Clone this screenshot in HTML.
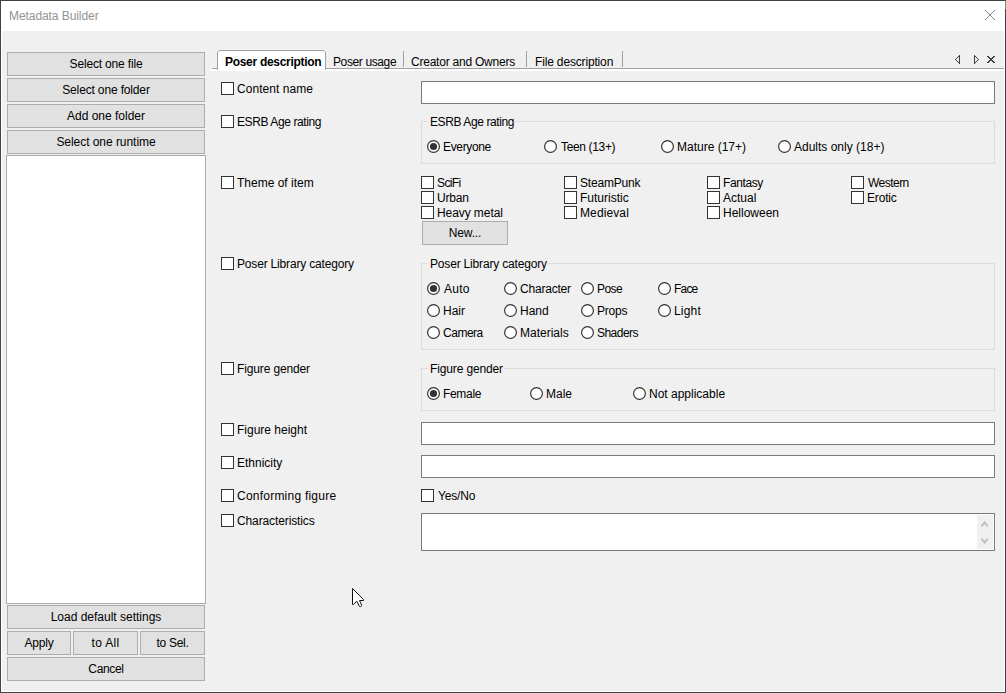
<!DOCTYPE html>
<html><head><meta charset="utf-8">
<style>
html,body{margin:0;padding:0;}
body{width:1006px;height:693px;position:relative;overflow:hidden;background:#434343;font:12px/14px "Liberation Sans",sans-serif;color:#000;}
.a{position:absolute;}
.t{position:absolute;white-space:nowrap;font:12px/14px "Liberation Sans",sans-serif;}
.btn{position:absolute;box-sizing:border-box;border:1px solid #adadad;background:#e1e1e1;height:24px;text-align:center;line-height:14px;padding-top:4px;white-space:nowrap;}
.cb{position:absolute;box-sizing:border-box;width:13px;height:13px;border:1px solid #333;background:#fff;}
.rb{position:absolute;width:13px;height:13px;}
.ed{position:absolute;box-sizing:border-box;border:1px solid #7a7a7a;background:#fff;}
.gb{position:absolute;box-sizing:border-box;border:1px solid #dcdcdc;}
.gt{position:absolute;white-space:nowrap;background:#f0f0f0;padding:0 1px 0 2px;font:12px/14px "Liberation Sans",sans-serif;}
</style></head><body>
<!-- window frame -->
<div class="a" style="left:1px;top:1px;width:1004px;height:691px;background:#fff;"></div>
<div class="a" style="left:2px;top:31px;width:1002px;height:660px;background:#f0f0f0;"></div>
<div class="t" style="left:9px;top:9px;color:#939393;letter-spacing:-0.07px;">Metadata Builder</div>
<svg class="a" style="left:985px;top:10px" width="10" height="10" shape-rendering="crispEdges"><g fill="#8a8a8a"><rect x="5" y="4" width="1" height="1"></rect><rect x="2" y="2" width="1" height="1"></rect><rect x="7" y="7" width="1" height="1"></rect><rect x="4" y="5" width="1" height="1"></rect><rect x="3" y="3" width="1" height="1"></rect><rect x="3" y="6" width="1" height="1"></rect><rect x="8" y="8" width="1" height="1"></rect><rect x="2" y="7" width="1" height="1"></rect><rect x="1" y="8" width="1" height="1"></rect><rect x="4" y="4" width="1" height="1"></rect><rect x="9" y="0" width="1" height="1"></rect><rect x="5" y="5" width="1" height="1"></rect><rect x="0" y="0" width="1" height="1"></rect><rect x="9" y="9" width="1" height="1"></rect><rect x="8" y="1" width="1" height="1"></rect><rect x="1" y="1" width="1" height="1"></rect><rect x="0" y="9" width="1" height="1"></rect><rect x="7" y="2" width="1" height="1"></rect><rect x="6" y="6" width="1" height="1"></rect><rect x="6" y="3" width="1" height="1"></rect></g></svg>

<div class="a" style="left:1005px;top:1px;width:1px;height:8px;background:#6b9a5e;"></div>
<!-- left panel -->
<div class="btn" style="left: 7px; top: 52px; width: 198px; letter-spacing: -0.171px;">Select one file</div>
<div class="btn" style="left: 7px; top: 78px; width: 198px; letter-spacing: -0.15px;">Select one folder</div>
<div class="btn" style="left: 7px; top: 104px; width: 198px; letter-spacing: 0px;">Add one folder</div>
<div class="btn" style="left: 7px; top: 130px; width: 198px; letter-spacing: -0.047px;">Select one runtime</div>
<div class="a" style="left:6px;top:155px;width:198px;height:447px;border:1px solid #a9abb0;background:#fff;"></div>
<div class="btn" style="left: 7px; top: 605px; width: 198px; letter-spacing: 0px;">Load default settings</div>
<div class="btn" style="left: 7px; top: 631px; width: 64px; letter-spacing: -0.2px;">Apply</div>
<div class="btn" style="left: 73px; top: 631px; width: 65px; letter-spacing: 0.34px;">to All</div>
<div class="btn" style="left: 140px; top: 631px; width: 65px; letter-spacing: -0.267px;">to Sel.</div>
<div class="btn" style="left: 7px; top: 657px; width: 198px; letter-spacing: -0.32px;">Cancel</div>

<!-- tabs -->
<div class="a" style="left:212px;top:68px;width:792px;height:1px;background:#a0a0a0;"></div>
<div class="a" style="left:211px;top:69px;width:793px;height:2px;background:#fff;"></div>
<div class="a" style="left:218px;top:51px;width:107px;height:19px;background:#fff;"></div>
<div class="a" style="left:219px;top:50px;width:105px;height:1px;background:#a0a0a0;"></div>
<div class="a" style="left:218px;top:51px;width:1px;height:1px;background:#a0a0a0;"></div>
<div class="a" style="left:324px;top:51px;width:1px;height:1px;background:#a0a0a0;"></div>
<div class="a" style="left:217px;top:52px;width:1px;height:18px;background:#a0a0a0;"></div>
<div class="a" style="left:325px;top:52px;width:1px;height:18px;background:#a0a0a0;"></div>
<div class="t" style="left: 225px; top: 55px; font-weight: bold; letter-spacing: -0.3px;">Poser description</div>
<div class="t" style="left: 333px; top: 55px; letter-spacing: -0.38px;">Poser usage</div>
<div class="a" style="left:403px;top:51px;width:1px;height:16px;background:#a0a0a0;"></div>
<div class="t" style="left: 411px; top: 55px; letter-spacing: -0.227px;">Creator and Owners</div>
<div class="a" style="left:526px;top:51px;width:1px;height:16px;background:#a0a0a0;"></div>
<div class="t" style="left: 535px; top: 55px; letter-spacing: -0.16px;">File description</div>
<div class="a" style="left:622px;top:51px;width:1px;height:16px;background:#a0a0a0;"></div>
<svg class="a" style="left:950px;top:50px" width="50" height="20" shape-rendering="crispEdges"><g fill="#404040"><rect x="9" y="5" width="1" height="1"></rect><rect x="9" y="6" width="1" height="1"></rect><rect x="9" y="7" width="1" height="1"></rect><rect x="9" y="8" width="1" height="1"></rect><rect x="9" y="9" width="1" height="1"></rect><rect x="9" y="10" width="1" height="1"></rect><rect x="9" y="11" width="1" height="1"></rect><rect x="9" y="12" width="1" height="1"></rect><rect x="9" y="13" width="1" height="1"></rect><rect x="8" y="6" width="1" height="1"></rect><rect x="7" y="7" width="1" height="1"></rect><rect x="6" y="8" width="1" height="1"></rect><rect x="5" y="9" width="1" height="1"></rect><rect x="6" y="10" width="1" height="1"></rect><rect x="7" y="11" width="1" height="1"></rect><rect x="8" y="12" width="1" height="1"></rect><rect x="24" y="5" width="1" height="1"></rect><rect x="24" y="6" width="1" height="1"></rect><rect x="24" y="7" width="1" height="1"></rect><rect x="24" y="8" width="1" height="1"></rect><rect x="24" y="9" width="1" height="1"></rect><rect x="24" y="10" width="1" height="1"></rect><rect x="24" y="11" width="1" height="1"></rect><rect x="24" y="12" width="1" height="1"></rect><rect x="24" y="13" width="1" height="1"></rect><rect x="25" y="6" width="1" height="1"></rect><rect x="26" y="7" width="1" height="1"></rect><rect x="27" y="8" width="1" height="1"></rect><rect x="28" y="9" width="1" height="1"></rect><rect x="27" y="10" width="1" height="1"></rect><rect x="26" y="11" width="1" height="1"></rect><rect x="25" y="12" width="1" height="1"></rect><rect x="37" y="6" width="1" height="1"></rect><rect x="38" y="6" width="1" height="1"></rect><rect x="43" y="6" width="1" height="1"></rect><rect x="44" y="6" width="1" height="1"></rect><rect x="38" y="7" width="1" height="1"></rect><rect x="39" y="7" width="1" height="1"></rect><rect x="42" y="7" width="1" height="1"></rect><rect x="43" y="7" width="1" height="1"></rect><rect x="39" y="8" width="1" height="1"></rect><rect x="40" y="8" width="1" height="1"></rect><rect x="41" y="8" width="1" height="1"></rect><rect x="42" y="8" width="1" height="1"></rect><rect x="40" y="9" width="1" height="1"></rect><rect x="41" y="9" width="1" height="1"></rect><rect x="39" y="10" width="1" height="1"></rect><rect x="40" y="10" width="1" height="1"></rect><rect x="41" y="10" width="1" height="1"></rect><rect x="42" y="10" width="1" height="1"></rect><rect x="38" y="11" width="1" height="1"></rect><rect x="39" y="11" width="1" height="1"></rect><rect x="42" y="11" width="1" height="1"></rect><rect x="43" y="11" width="1" height="1"></rect><rect x="37" y="12" width="1" height="1"></rect><rect x="38" y="12" width="1" height="1"></rect><rect x="43" y="12" width="1" height="1"></rect><rect x="44" y="12" width="1" height="1"></rect></g></svg>

<!-- row labels -->
<div class="cb" style="left:221px;top:82px"></div><div class="t" style="left: 237px; top: 82px; letter-spacing: 0.057px;">Content name</div>
<div class="cb" style="left:221px;top:115px"></div><div class="t" style="left: 237px; top: 115px; letter-spacing: -0.4px;">ESRB Age rating</div>
<div class="cb" style="left:221px;top:176px"></div><div class="t" style="left: 237px; top: 176px; letter-spacing: 0px;">Theme of item</div>
<div class="cb" style="left:221px;top:257px"></div><div class="t" style="left: 237px; top: 257px; letter-spacing: -0.178px;">Poser Library category</div>
<div class="cb" style="left:221px;top:362px"></div><div class="t" style="left: 237px; top: 362px; letter-spacing: -0.134px;">Figure gender</div>
<div class="cb" style="left:221px;top:423px"></div><div class="t" style="left: 237px; top: 423px; letter-spacing: 0px;">Figure height</div>
<div class="cb" style="left:221px;top:456px"></div><div class="t" style="left: 237px; top: 456px; letter-spacing: 0px;">Ethnicity</div>
<div class="cb" style="left:221px;top:489px"></div><div class="t" style="left: 237px; top: 489px; letter-spacing: 0.23px;">Conforming figure</div>
<div class="cb" style="left:221px;top:514px"></div><div class="t" style="left: 237px; top: 514px; letter-spacing: -0.114px;">Characteristics</div>

<!-- content name -->
<div class="ed" style="left:421px;top:81px;width:574px;height:23px;"></div>

<!-- ESRB group -->
<div class="gb" style="left:421px;top:121px;width:574px;height:43px;"></div>
<div class="gt" style="left: 428px; top: 115px; letter-spacing: -0.4px;">ESRB Age rating</div>
<!--RADIOS_ESRB-->
<svg class="rb" style="left:427px;top:140px" width="13" height="13" viewBox="0 0 13 13"><circle cx="6.5" cy="6.5" r="5.9" fill="#fff" stroke="#333" stroke-width="1.2"></circle><circle cx="6.5" cy="6.5" r="3.6" fill="#333"></circle></svg><div class="t" style="left: 443px; top: 140px; letter-spacing: -0.343px;">Everyone</div>
<svg class="rb" style="left:544px;top:140px" width="13" height="13" viewBox="0 0 13 13"><circle cx="6.5" cy="6.5" r="5.9" fill="#fff" stroke="#333" stroke-width="1.2"></circle></svg><div class="t" style="left: 561px; top: 140px; letter-spacing: -0.35px;">Teen (13+)</div>
<svg class="rb" style="left:661px;top:140px" width="13" height="13" viewBox="0 0 13 13"><circle cx="6.5" cy="6.5" r="5.9" fill="#fff" stroke="#333" stroke-width="1.2"></circle></svg><div class="t" style="left: 677px; top: 140px; letter-spacing: 0px;">Mature (17+)</div>
<svg class="rb" style="left:778px;top:140px" width="13" height="13" viewBox="0 0 13 13"><circle cx="6.5" cy="6.5" r="5.9" fill="#fff" stroke="#333" stroke-width="1.2"></circle></svg><div class="t" style="left: 794px; top: 140px; letter-spacing: 0px;">Adults only (18+)</div>
<!--/RADIOS_ESRB-->

<!-- theme -->
<!--THEME-->
<div class="cb" style="left:421px;top:176px"></div><div class="t" style="left: 437px; top: 176px; letter-spacing: -0.6px;">SciFi</div>
<div class="cb" style="left:421px;top:191px"></div><div class="t" style="left: 437px; top: 191px; letter-spacing: -0.2px;">Urban</div>
<div class="cb" style="left:421px;top:206px"></div><div class="t" style="left: 437px; top: 206px; letter-spacing: -0.08px;">Heavy metal</div>
<div class="cb" style="left:564px;top:176px"></div><div class="t" style="left: 580px; top: 176px; letter-spacing: -0.2px;">SteamPunk</div>
<div class="cb" style="left:564px;top:191px"></div><div class="t" style="left: 580px; top: 191px; letter-spacing: 0px;">Futuristic</div>
<div class="cb" style="left:564px;top:206px"></div><div class="t" style="left: 580px; top: 206px; letter-spacing: 0.115px;">Medieval</div>
<div class="cb" style="left:707px;top:176px"></div><div class="t" style="left: 723px; top: 176px; letter-spacing: -0.4px;">Fantasy</div>
<div class="cb" style="left:707px;top:191px"></div><div class="t" style="left: 723px; top: 191px; letter-spacing: 0px;">Actual</div>
<div class="cb" style="left:707px;top:206px"></div><div class="t" style="left: 723px; top: 206px; letter-spacing: 0px;">Helloween</div>
<div class="cb" style="left:851px;top:176px"></div><div class="t" style="left: 868px; top: 176px; letter-spacing: -0.533px;">Western</div>
<div class="cb" style="left:851px;top:191px"></div><div class="t" style="left: 867px; top: 191px; letter-spacing: -0.16px;">Erotic</div>
<div class="btn" style="left: 422px; top: 221px; width: 86px; letter-spacing: -0.16px;">New...</div>
<!--/THEME-->

<!-- library group -->
<div class="gb" style="left:421px;top:263px;width:574px;height:87px;"></div>
<div class="gt" style="left: 428px; top: 257px; letter-spacing: -0.178px;">Poser Library category</div>
<!--RADIOS_LIB-->
<svg class="rb" style="left:427px;top:282px" width="13" height="13" viewBox="0 0 13 13"><circle cx="6.5" cy="6.5" r="5.9" fill="#fff" stroke="#333" stroke-width="1.2"></circle><circle cx="6.5" cy="6.5" r="3.6" fill="#333"></circle></svg><div class="t" style="left: 444px; top: 282px; letter-spacing: 0.266px;">Auto</div>
<svg class="rb" style="left:427px;top:304px" width="13" height="13" viewBox="0 0 13 13"><circle cx="6.5" cy="6.5" r="5.9" fill="#fff" stroke="#333" stroke-width="1.2"></circle></svg><div class="t" style="left: 443px; top: 304px; letter-spacing: 0px;">Hair</div>
<svg class="rb" style="left:427px;top:326px" width="13" height="13" viewBox="0 0 13 13"><circle cx="6.5" cy="6.5" r="5.9" fill="#fff" stroke="#333" stroke-width="1.2"></circle></svg><div class="t" style="left: 443px; top: 326px; letter-spacing: -0.48px;">Camera</div>
<svg class="rb" style="left:504px;top:282px" width="13" height="13" viewBox="0 0 13 13"><circle cx="6.5" cy="6.5" r="5.9" fill="#fff" stroke="#333" stroke-width="1.2"></circle></svg><div class="t" style="left: 520px; top: 282px; letter-spacing: -0.2px;">Character</div>
<svg class="rb" style="left:504px;top:304px" width="13" height="13" viewBox="0 0 13 13"><circle cx="6.5" cy="6.5" r="5.9" fill="#fff" stroke="#333" stroke-width="1.2"></circle></svg><div class="t" style="left: 520px; top: 304px; letter-spacing: 0px;">Hand</div>
<svg class="rb" style="left:504px;top:326px" width="13" height="13" viewBox="0 0 13 13"><circle cx="6.5" cy="6.5" r="5.9" fill="#fff" stroke="#333" stroke-width="1.2"></circle></svg><div class="t" style="left: 520px; top: 326px; letter-spacing: 0px;">Materials</div>
<svg class="rb" style="left:581px;top:282px" width="13" height="13" viewBox="0 0 13 13"><circle cx="6.5" cy="6.5" r="5.9" fill="#fff" stroke="#333" stroke-width="1.2"></circle></svg><div class="t" style="left: 597px; top: 282px; letter-spacing: -0.534px;">Pose</div>
<svg class="rb" style="left:581px;top:304px" width="13" height="13" viewBox="0 0 13 13"><circle cx="6.5" cy="6.5" r="5.9" fill="#fff" stroke="#333" stroke-width="1.2"></circle></svg><div class="t" style="left: 597px; top: 304px; letter-spacing: -0.2px;">Props</div>
<svg class="rb" style="left:581px;top:326px" width="13" height="13" viewBox="0 0 13 13"><circle cx="6.5" cy="6.5" r="5.9" fill="#fff" stroke="#333" stroke-width="1.2"></circle></svg><div class="t" style="left: 597px; top: 326px; letter-spacing: -0.533px;">Shaders</div>
<svg class="rb" style="left:658px;top:282px" width="13" height="13" viewBox="0 0 13 13"><circle cx="6.5" cy="6.5" r="5.9" fill="#fff" stroke="#333" stroke-width="1.2"></circle></svg><div class="t" style="left: 674px; top: 282px; letter-spacing: -0.801px;">Face</div>
<svg class="rb" style="left:658px;top:304px" width="13" height="13" viewBox="0 0 13 13"><circle cx="6.5" cy="6.5" r="5.9" fill="#fff" stroke="#333" stroke-width="1.2"></circle></svg><div class="t" style="left: 674px; top: 304px; letter-spacing: 0.2px;">Light</div>
<!--/RADIOS_LIB-->

<!-- gender group -->
<div class="gb" style="left:421px;top:368px;width:574px;height:43px;"></div>
<div class="gt" style="left: 428px; top: 362px; letter-spacing: -0.133px;">Figure gender</div>
<!--RADIOS_GEN-->
<svg class="rb" style="left:427px;top:387px" width="13" height="13" viewBox="0 0 13 13"><circle cx="6.5" cy="6.5" r="5.9" fill="#fff" stroke="#333" stroke-width="1.2"></circle><circle cx="6.5" cy="6.5" r="3.6" fill="#333"></circle></svg><div class="t" style="left: 443px; top: 387px; letter-spacing: -0.32px;">Female</div>
<svg class="rb" style="left:530px;top:387px" width="13" height="13" viewBox="0 0 13 13"><circle cx="6.5" cy="6.5" r="5.9" fill="#fff" stroke="#333" stroke-width="1.2"></circle></svg><div class="t" style="left: 546px; top: 387px; letter-spacing: 0px;">Male</div>
<svg class="rb" style="left:633px;top:387px" width="13" height="13" viewBox="0 0 13 13"><circle cx="6.5" cy="6.5" r="5.9" fill="#fff" stroke="#333" stroke-width="1.2"></circle></svg><div class="t" style="left: 649px; top: 387px; letter-spacing: 0px;">Not applicable</div>
<!--/RADIOS_GEN-->

<div class="ed" style="left:421px;top:422px;width:574px;height:23px;"></div>
<div class="ed" style="left:421px;top:455px;width:574px;height:23px;"></div>
<div class="cb" style="left:421px;top:489px"></div><div class="t" style="left: 438px; top: 489px; letter-spacing: -0.16px;">Yes/No</div>
<div class="ed" style="left:421px;top:513px;width:574px;height:38px;"></div>
<div class="a" style="left:977px;top:515px;width:16px;height:34px;background:#f0f0f0;"></div>
<svg class="a" style="left:977px;top:515px" width="16" height="34" viewBox="0 0 16 34"><path d="M4.4 11.3L7.6 7.5L10.8 11.3M4.4 23.7L7.6 27.5L10.8 23.7" stroke="#bdbdbd" stroke-width="1.8" fill="none"></path></svg>

<!-- cursor -->
<svg class="a" style="left:350px;top:586px" width="18" height="24" viewBox="-2 -2 18 24">
<path d="M0.5 0.5L11.5 11.5L11.5 12.5L7.5 12.5L9.8 17.6L8.6 18.6L7.4 18.3L4.8 13.2L1.3 16.5L0.5 16.5Z" fill="#fff" stroke="#111" stroke-width="1.0" stroke-linejoin="round"></path>
</svg>

</body></html>
